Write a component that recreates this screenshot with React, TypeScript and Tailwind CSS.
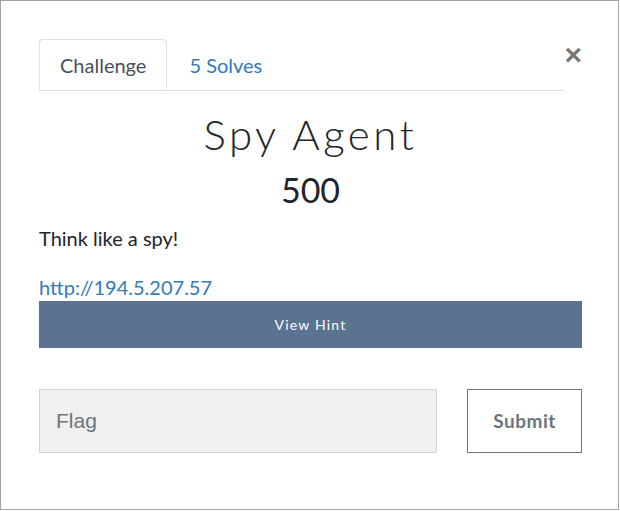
import React from 'react';

const App: React.FC = () => {
  return (
    <div className="w-[620px] h-[511px] bg-white">
      <div className="w-[619px] h-[510px] border border-[#a3a3a3] pt-[38px] pl-[38px] pr-[36px] font-['Lato',sans-serif]">
        <div className="flex">
          <ul className="flex w-[526px] border-b border-[#dee2e6]">
            <li className="h-[51px] px-5 flex items-center border border-[#dee2e6] border-b-white rounded-t -mb-px text-[20px] text-[#495057]">
              Challenge
            </li>
            <li className="h-[51px] px-[22px] flex items-center text-[20px] text-[#337ab7]">
              5 Solves
            </li>
          </ul>
          <button className="ml-auto mt-[1px] h-[26px] text-[30px] leading-none font-bold text-[#777] font-['Liberation_Sans',sans-serif]">
            ×
          </button>
        </div>

        <h2 className="mt-[17px] text-center text-[42px] leading-[52px] font-light tracking-[3.5px] text-[#212529]">
          Spy Agent
        </h2>
        <h3 className="mt-[10px] text-center text-[34px] leading-[40px] text-[#212529]">500</h3>

        <p className="mt-[13px] text-[20px] leading-[30px] text-[#212529]">Think like a spy!</p>
        <a className="block mt-[21px] text-[20px] leading-[26px] text-[#337ab7]">http://194.5.207.57</a>

        <button className="mt-[1px] w-full h-[47px] bg-[#5b7290] text-white text-[14px] tracking-[1.2px]">
          View Hint
        </button>

        <div className="mt-[41px] flex items-stretch">
          <div className="w-[398px] h-[64px] bg-[#f0f0f0] border border-[#cfd4d9] flex items-center px-4 text-[21px] text-[#6c757d] font-['Liberation_Sans',sans-serif]">
            Flag
          </div>
          <button className="ml-auto w-[115px] h-[64px] border border-[#6c757d] text-[19px] font-bold text-[#6c757d] tracking-[0.5px]">
            Submit
          </button>
        </div>
      </div>
    </div>
  );
};

export default App;
